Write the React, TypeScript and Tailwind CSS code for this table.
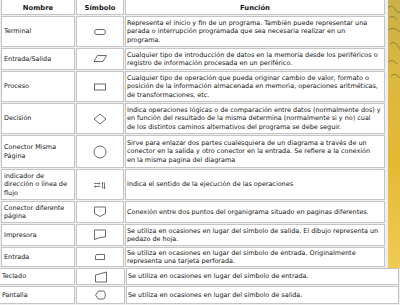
import React from 'react';

const stroke = '#444444';

function Sym({ kind }: { kind: string }) {
  return (
    <svg width="16" height="14" viewBox="0 0 16 14" fill="none" stroke={stroke} strokeWidth="0.8">
      {kind === 'terminal' && <rect x="2.5" y="4.5" width="11" height="5" rx="2.5" />}
      {kind === 'io' && <polygon points="5.5,3.5 14.5,3.5 11,9.5 2,9.5" />}
      {kind === 'process' && <rect x="2.5" y="4" width="11" height="6" />}
      {kind === 'decision' && <polygon points="8,2 14,7 8,12 2,7" />}
      {kind === 'connector' && <circle cx="8" cy="7" r="6" />}
      {kind === 'flow' && (
        <g strokeWidth="0.7">
          <path d="M2 5.5 H8 M6.8 4.5 L8 5.5 L6.8 6.5" />
          <path d="M2.5 8.5 H8.5 M3.7 7.5 L2.5 8.5 L3.7 9.5" />
          <path d="M10.5 4.5 V10.5 M12.5 4.5 V10.5 M9.7 5.5 L10.5 4.5 L11.3 5.5 M11.7 9.5 L12.5 10.5 L13.3 9.5" />
        </g>
      )}
      {kind === 'offpage' && <polygon points="2.5,2 13.5,2 13.5,8.5 8,11.5 2.5,8.5" />}
      {kind === 'printer' && <path d="M2.5 2 H13.5 V9 Q8 8.8 2.5 11.5 Z" />}
      {kind === 'card' && <polygon points="4.5,4.5 12.5,4.5 12.5,9.5 3.5,9.5 3.5,6" />}
      {kind === 'manual' && <polygon points="2.5,5 13.5,2 13.5,12 2.5,12" />}
      {kind === 'display' && <path d="M2.5 7 L5.3 3 H10.8 Q14 7 10.8 11 H5.3 Z" />}
    </svg>
  );
}

type Row = { name: string[]; sym: string; fn: string[]; h: string };

const rows: Row[] = [
  {
    name: ['Terminal'],
    sym: 'terminal',
    h: 'h-[31px]',
    fn: [
      'Representa el inicio y fin de un programa. También puede representar una',
      'parada o interrupción programada que sea necesaria realizar en un',
      'programa.',
    ],
  },
  {
    name: ['Entrada/Salida'],
    sym: 'io',
    h: 'h-[22px]',
    fn: [
      'Cualquier tipo de introducción de datos en la memoria desde los periféricos o',
      'registro de información procesada en un periférico.',
    ],
  },
  {
    name: ['Proceso'],
    sym: 'process',
    h: 'h-[31px]',
    fn: [
      'Cualquier tipo de operación que pueda originar cambio de valor, formato o',
      'posición de la información almacenada en memoria, operaciones aritméticas,',
      'de transformaciones, etc.',
    ],
  },
  {
    name: ['Decisión'],
    sym: 'decision',
    h: 'h-[31px]',
    fn: [
      'Indica operaciones lógicas o de comparación entre datos (normalmente dos) y',
      'en función del resultado de la misma determina (normalmente si y no) cual',
      'de los distintos caminos alternativos del programa se debe seguir.',
    ],
  },
  {
    name: ['Conector Misma', 'Página'],
    sym: 'connector',
    h: 'h-[33px]',
    fn: [
      'Sirve para enlazar dos partes cualesquiera de un diagrama a través de un',
      'conector en la salida y otro conector en la entrada. Se refiere a la conexión',
      'en la misma pagina del diagrama',
    ],
  },
  {
    name: ['indicador de', 'dirección o línea de', 'flujo'],
    sym: 'flow',
    h: 'h-[31px]',
    fn: ['Indica el sentido de la ejecución de las operaciones'],
  },
  {
    name: ['Conector diferente', 'página'],
    sym: 'offpage',
    h: 'h-[22px]',
    fn: ['Conexión entre dos puntos del organigrama situado en paginas diferentes.'],
  },
  {
    name: ['Impresora'],
    sym: 'printer',
    h: 'h-[22px]',
    fn: [
      'Se utiliza en ocasiones en lugar del símbolo de salida. El dibujo representa un',
      'pedazo de hoja.',
    ],
  },
  {
    name: ['Entrada'],
    sym: 'card',
    h: 'h-[20px]',
    fn: [
      'Se utiliza en ocasiones en lugar del símbolo de entrada. Originalmente',
      'representa una tarjeta perforada.',
    ],
  },
];

const extra: Row[] = [
  { name: ['Teclado'], sym: 'manual', h: 'h-[17px]', fn: ['Se utiliza en ocasiones en lugar del símbolo de entrada.'] },
  { name: ['Pantalla'], sym: 'display', h: 'h-[18px]', fn: ['Se utiliza en ocasiones en lugar del símbolo de salida.'] },
];

const cell = 'bg-white border border-[#c4c4c4] overflow-hidden';

function Cells({ r }: { r: Row }) {
  return (
    <>
      <div className={`${cell} ${r.h} flex flex-col justify-center px-[2px]`}>
        {r.name.map((l) => (
          <span key={l} className="block whitespace-nowrap">{l}</span>
        ))}
      </div>
      <div className={`${cell} ${r.h} flex items-center justify-center`}>
        <Sym kind={r.sym} />
      </div>
      <div className={`${cell} ${r.h} flex flex-col justify-center pl-[1px]`}>
        {r.fn.map((l) => (
          <span key={l} className="block whitespace-nowrap">{l}</span>
        ))}
      </div>
    </>
  );
}

export default function App() {
  return (
    <div className="w-[400px] h-[305px] overflow-hidden bg-[#efefef] text-[6.45px] leading-[8.5px] text-[#151515] font-['DejaVu_Sans','Verdana',sans-serif]">
      <div className="flex h-[268px]">
        <div className="-mt-[1px] ml-[1px] grid grid-cols-[74px_48px_260px] gap-[1px] content-start">
          <div className={`${cell} h-[16px] flex items-center justify-center pt-[2px] font-bold text-[6.8px]`}>Nombre</div>
          <div className={`${cell} h-[16px] flex items-center justify-center pt-[2px] font-bold text-[6.8px]`}>Símbolo</div>
          <div className={`${cell} h-[16px] flex items-center justify-center pt-[2px] font-bold text-[6.8px]`}>Función</div>
          {rows.map((r) => (
            <Cells key={r.name.join()} r={r} />
          ))}
        </div>
        <div className="ml-[3px] w-[12px] h-[268px] overflow-hidden bg-[linear-gradient(180deg,#c9b04a_0%,#dcb83e_30%,#e6b832_60%,#efcb52_100%)]">
          <svg width="12" height="90" viewBox="0 0 12 90" fill="none" stroke="#7d7a3a" strokeWidth="0.8">
            <path d="M0 8 Q4 4 7 9 T12 12" />
            <path d="M1 18 Q5 14 9 20" />
            <path d="M0 30 Q6 26 12 32" />
            <path d="M2 44 Q6 40 10 46 T12 52" />
            <path d="M0 62 Q5 58 9 64" />
            <path d="M3 76 Q7 72 12 78" />
          </svg>
        </div>
      </div>
      <div className="-ml-[1px] grid grid-cols-[76px_49px_273px] gap-[1px]">
        {extra.map((r) => (
          <Cells key={r.name.join()} r={r} />
        ))}
      </div>
    </div>
  );
}
